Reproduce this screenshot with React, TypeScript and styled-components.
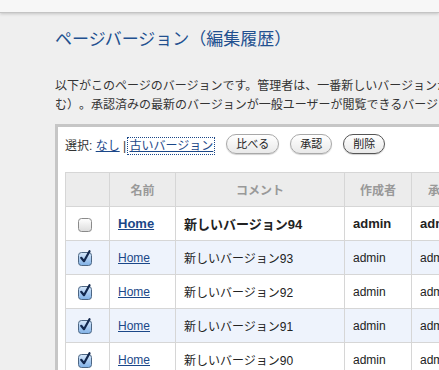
import React from 'react';
import styled, { createGlobalStyle } from 'styled-components';

const colors = {
    page: '#efefef',
    link: '#1b4788',
    title: '#22508f',
    border: '#d6d6d6',
    headBg: '#ececec',
    altRow: '#eef3fc',
};

const Global = createGlobalStyle`
    html, body {
        margin: 0;
        background: ${colors.page};
        overflow: hidden;
    }
    body {
        font-family: "Liberation Sans", "Noto Sans CJK JP", sans-serif;
        color: #222;
        text-spacing-trim: space-all;
        font-feature-settings: "chws" 0, "halt" 0, "palt" 0;
    }
`;

const TopBar = styled.div`
    height: 12px;
    background: #f7f7f7;
    border-bottom: 1px solid #c4c4c4;
    box-shadow: 0 1px 3px rgba(0, 0, 0, 0.18);
`;

const Main = styled.div`
    width: 900px;
    padding: 15px 0 0 55px;
`;

const Title = styled.h1`
    margin: 0;
    font-size: 17px;
    line-height: 24px;
    font-weight: normal;
    color: ${colors.title};
`;

const Intro = styled.p`
    margin: 25px 0 0;
    font-size: 12px;
    line-height: 19px;
    color: #333;
    white-space: nowrap;
`;

const Panel = styled.div`
    margin-top: 9px;
    background: #fff;
    border: 3px solid #c6c6c6;
    border-right: none;
    padding: 7px 0 0 7px;
    height: 300px;
`;

const SelectRow = styled.div`
    display: flex;
    align-items: center;
    height: 20px;
    font-size: 12px;
    color: #333;
`;

const SelectLabel = styled.span`
    margin-right: 13px;
    white-space: pre;
`;

const Link = styled.a<{ $focus?: boolean; $bold?: boolean }>`
    color: ${colors.link};
    text-decoration: underline;
    cursor: pointer;
    font-weight: ${p => (p.$bold ? 'bold' : 'normal')};
    outline: ${p => (p.$focus ? `1px dotted ${colors.link}` : 'none')};
    outline-offset: 1px;
`;

const Buttons = styled.div`
    display: flex;
    gap: 11px;
`;

const PillBtn = styled.button<{ $active?: boolean }>`
    height: 20px;
    padding: 0 9px;
    border-radius: 10px;
    border: 1px solid ${p => (p.$active ? '#555' : '#a8a8a8')};
    background: linear-gradient(#ffffff, #e9e9e9);
    box-shadow: 0 1px 1px rgba(0, 0, 0, 0.18);
    font-family: inherit;
    font-size: 11px;
    color: #222;
    line-height: 18px;
`;

const Table = styled.table`
    margin-top: 18px;
    border-collapse: collapse;
    table-layout: fixed;
    width: 415px;
    font-size: 12px;
`;

const Th = styled.th`
    height: 33px;
    padding: 0;
    border: 1px solid ${colors.border};
    background: ${colors.headBg};
    color: #999;
    font-weight: bold;
    text-align: center;
`;

const Row = styled.tr<{ $alt?: boolean }>`
    background: ${p => (p.$alt ? colors.altRow : '#fff')};
`;

const Td = styled.td<{ $bold?: boolean }>`
    height: 33px;
    padding: 0 8px;
    border: 1px solid ${colors.border};
    font-size: ${p => (p.$bold ? '13px' : '12px')};
    font-weight: ${p => (p.$bold ? 'bold' : 'normal')};
    color: #222;
    white-space: nowrap;
    overflow: hidden;
`;

const CheckWrap = styled.span`
    display: inline-block;
    vertical-align: middle;
    margin-left: 4px;
    width: 14px;
    height: 16px;
`;

function Check({ checked }: { checked: boolean }) {
    const id = checked ? 'cbOn' : 'cbOff';
    return (
        <CheckWrap>
            <svg width="14" height="16" viewBox="0 0 14 16">
                <defs>
                    <linearGradient id={id} x1="0" y1="0" x2="0" y2="1">
                        <stop offset="0" stopColor={checked ? '#d7e8fb' : '#ffffff'} />
                        <stop offset="1" stopColor={checked ? '#7fb0e6' : '#dcdcdc'} />
                    </linearGradient>
                </defs>
                <rect
                    x="0.5"
                    y="2.5"
                    width="13"
                    height="13"
                    rx="3"
                    fill={`url(#${id})`}
                    stroke={checked ? '#4d6683' : '#8a8a8a'}
                />
                {checked && (
                    <path
                        d="M3.2 7.8 L6 11.2 L11.5 1.2"
                        fill="none"
                        stroke="#13284e"
                        strokeWidth="2.2"
                        strokeLinecap="round"
                        strokeLinejoin="round"
                    />
                )}
            </svg>
        </CheckWrap>
    );
}

const versions = [94, 93, 92, 91, 90, 89];

export default function App() {
    return (
        <>
            <Global />
            <TopBar />
            <Main>
                <Title>ページバージョン（編集履歴）</Title>
                <Intro>
                    以下がこのページのバージョンです。管理者は、一番新しいバージョンから以前のバージョンを削除できます（承認待ちのバージョンを含
                    <br />
                    む）。承認済みの最新のバージョンが一般ユーザーが閲覧できるバージョンです。
                </Intro>
                <Panel>
                    <SelectRow>
                        <SelectLabel>
                            {'選択: '}
                            <Link>なし</Link>
                            {' | '}
                            <Link $focus>古いバージョン</Link>
                        </SelectLabel>
                        <Buttons>
                            <PillBtn>比べる</PillBtn>
                            <PillBtn>承認</PillBtn>
                            <PillBtn $active>削除</PillBtn>
                        </Buttons>
                    </SelectRow>
                    <Table>
                        <colgroup>
                            <col style={{ width: 44 }} />
                            <col style={{ width: 66 }} />
                            <col style={{ width: 169 }} />
                            <col style={{ width: 67 }} />
                            <col style={{ width: 69 }} />
                        </colgroup>
                        <thead>
                            <tr>
                                <Th />
                                <Th>名前</Th>
                                <Th>コメント</Th>
                                <Th>作成者</Th>
                                <Th>承認者</Th>
                            </tr>
                        </thead>
                        <tbody>
                            {versions.map((v, i) => {
                                const current = i === 0;
                                return (
                                    <Row key={v} $alt={i % 2 === 1}>
                                        <Td>
                                            <Check checked={!current} />
                                        </Td>
                                        <Td $bold={current}>
                                            <Link $bold={current}>Home</Link>
                                        </Td>
                                        <Td $bold={current}>新しいバージョン{v}</Td>
                                        <Td $bold={current}>admin</Td>
                                        <Td $bold={current}>admin</Td>
                                    </Row>
                                );
                            })}
                        </tbody>
                    </Table>
                </Panel>
            </Main>
        </>
    );
}
